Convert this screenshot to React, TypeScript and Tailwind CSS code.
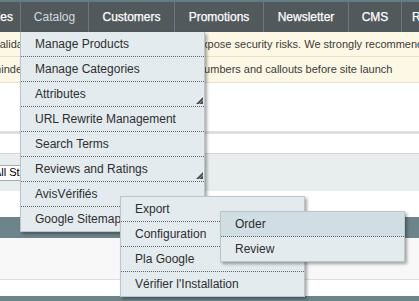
import React from "react";

const Grip = () => (
  <svg width="7" height="7" viewBox="0 0 7 7" className="absolute right-[1px] bottom-[2px]">
    <polygon points="7,0 7,7 0,7" fill="#4a4f52" />
    <line x1="7" y1="3" x2="3" y2="7" stroke="#9aa3a7" strokeWidth="0.8" />
  </svg>
);

type Item = { label: string; sub?: boolean; active?: boolean };

const Menu = ({ items, className }: { items: Item[]; className: string }) => (
  <div
    className={
      "absolute w-[185px] bg-[#e3ebee] border border-[#bcc6ca] shadow-[2px_2px_3px_rgba(0,0,0,0.35)] " +
      className
    }
  >
    {items.map((it, i) => {
      const last = i === items.length - 1;
      return (
        <div
          key={it.label}
          className={
            "relative flex items-center pl-[14px] text-[12px] text-[#2e2e2e] " +
            (last ? "h-[24px] " : "h-[25px] border-b border-dotted border-[#5f666a] ") +
            (it.active ? "bg-[#d0dde2]" : "")
          }
        >
          {it.label}
          {it.sub && <Grip />}
        </div>
      );
    })}
  </div>
);

const navItems = [
  { label: "Customers", w: "w-[86px]" },
  { label: "Promotions", w: "w-[89px]" },
  { label: "Newsletter", w: "w-[85px]" },
  { label: "CMS", w: "w-[53px]" },
];

export default function App() {
  return (
    <div className="relative w-[419px] h-[301px] overflow-hidden bg-white font-['Liberation_Sans',Arial,sans-serif]">
      {/* Top navigation */}
      <div className="h-[2px] bg-[#627d86]" />
      <div className="flex h-[30px] bg-[#51595d] text-[12px] whitespace-nowrap">
        <div className="flex w-[21px] shrink-0 items-center justify-end border-r border-[#6e777b] pr-[7px] text-white [-webkit-text-stroke:0.25px_#fff]">
          Sales
        </div>
        <div className="flex w-[68px] shrink-0 items-center justify-center border-r border-[#6e777b] text-[#d3dbdf]">
          Catalog
        </div>
        {navItems.map((n) => (
          <div
            key={n.label}
            className={
              "flex shrink-0 items-center justify-center border-r border-[#6e777b] text-white [-webkit-text-stroke:0.25px_#fff] " +
              n.w
            }
          >
            {n.label}
          </div>
        ))}
        <div className="flex shrink-0 items-center pl-[10px] text-white [-webkit-text-stroke:0.25px_#fff]">
          Reports
        </div>
      </div>

      {/* Messages */}
      <div className="bg-[#fdf8e5] text-[11px] text-[#3a3a3a] whitespace-nowrap">
        <div className="flex h-[25px] items-center overflow-hidden border-b border-[#ece0c0]">
          <span className="-ml-[15px] w-[211px] shrink-0 overflow-hidden">
            Invalidated configuration files can be reached from the web and may
          </span>
          <span>expose security risks. We strongly recommend</span>
        </div>
        <div className="flex h-[26px] items-center overflow-hidden border-b border-[#ece0c0]">
          <span className="-ml-[22px] w-[220px] shrink-0 overflow-hidden">
            Reminder: please update the phone
          </span>
          <span>numbers and callouts before site launch</span>
        </div>
      </div>

      {/* Page body */}
      <div className="h-[48px] bg-white" />
      <div className="h-[3px] bg-[#dfdfdf]" />
      <div className="h-[19px] bg-white" />
      <div className="flex h-[38px] items-center border-t border-[#d3d9db] bg-[#e8edee]">
        <div className="-ml-[8px] flex h-[16px] w-[60px] items-center border border-[#a9a9a9] bg-white pl-[1px] text-[11px] text-black whitespace-nowrap">
          All Store Views
        </div>
      </div>
      <div className="h-[26px] bg-white" />
      <div className="h-[21px] bg-[#6d848b]" />
      <div className="h-[41px] bg-[#f8f8f8]" />
      <div className="h-[1px] bg-[#dedede]" />
      <div className="h-[16px] bg-white" />
      <div className="h-[10px] bg-[#6d848b]" />

      {/* Dropdown menus */}
      <Menu
        className="left-[20px] top-[32px] border-t-0"
        items={[
          { label: "Manage Products" },
          { label: "Manage Categories" },
          { label: "Attributes", sub: true },
          { label: "URL Rewrite Management" },
          { label: "Search Terms" },
          { label: "Reviews and Ratings", sub: true },
          { label: "AvisVérifiés", sub: true },
          { label: "Google Sitemap" },
        ]}
      />
      <Menu
        className="left-[120px] top-[196px]"
        items={[
          { label: "Export", sub: true },
          { label: "Configuration" },
          { label: "Pla Google" },
          { label: "Vérifier l'Installation" },
        ]}
      />
      <Menu
        className="left-[220px] top-[211px]"
        items={[{ label: "Order", active: true }, { label: "Review" }]}
      />
    </div>
  );
}
